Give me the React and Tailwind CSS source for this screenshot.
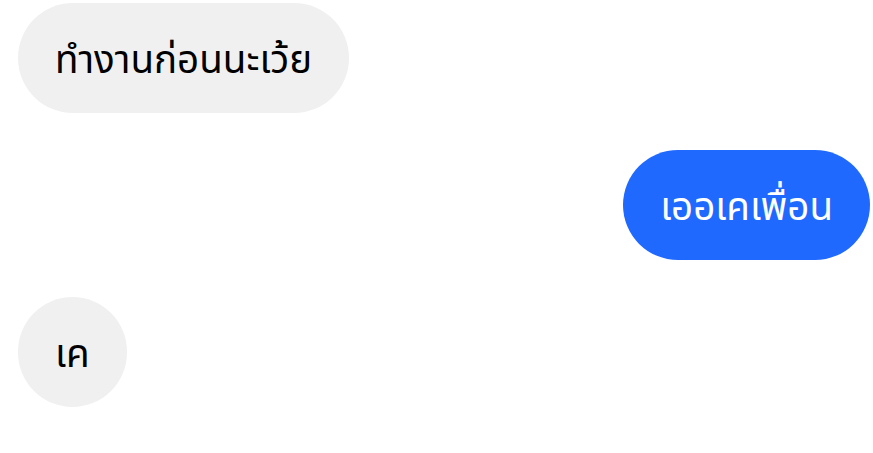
import React from 'react';

const messages = [
  { id: 1, text: 'ทำงานก่อนนะเว้ย', mine: false },
  { id: 2, text: 'เออเคเพื่อน', mine: true },
  { id: 3, text: 'เค', mine: false },
];

const Bubble = ({ text, mine }) => (
  <div className={mine ? 'flex justify-end' : 'flex justify-start'}>
    <div
      className={
        mine
          ? 'h-[110px] px-[37px] rounded-full bg-[#1f69ff] text-white flex items-center'
          : 'h-[110px] px-[37px] rounded-full bg-[#f0f0f0] text-black flex items-center'
      }
    >
      <span className="text-[38.5px] leading-none">{text}</span>
    </div>
  </div>
);

export default function App() {
  return (
    <div
      className="w-[873px] h-[453px] bg-white flex flex-col gap-[37px] pt-[3px] pl-[18px] pr-[3px]"
      style={{ fontFamily: '"Noto Sans", "Noto Sans Thai", "DejaVu Sans", sans-serif' }}
    >
      {messages.map(m => (
        <Bubble key={m.id} text={m.text} mine={m.mine} />
      ))}
    </div>
  );
}
